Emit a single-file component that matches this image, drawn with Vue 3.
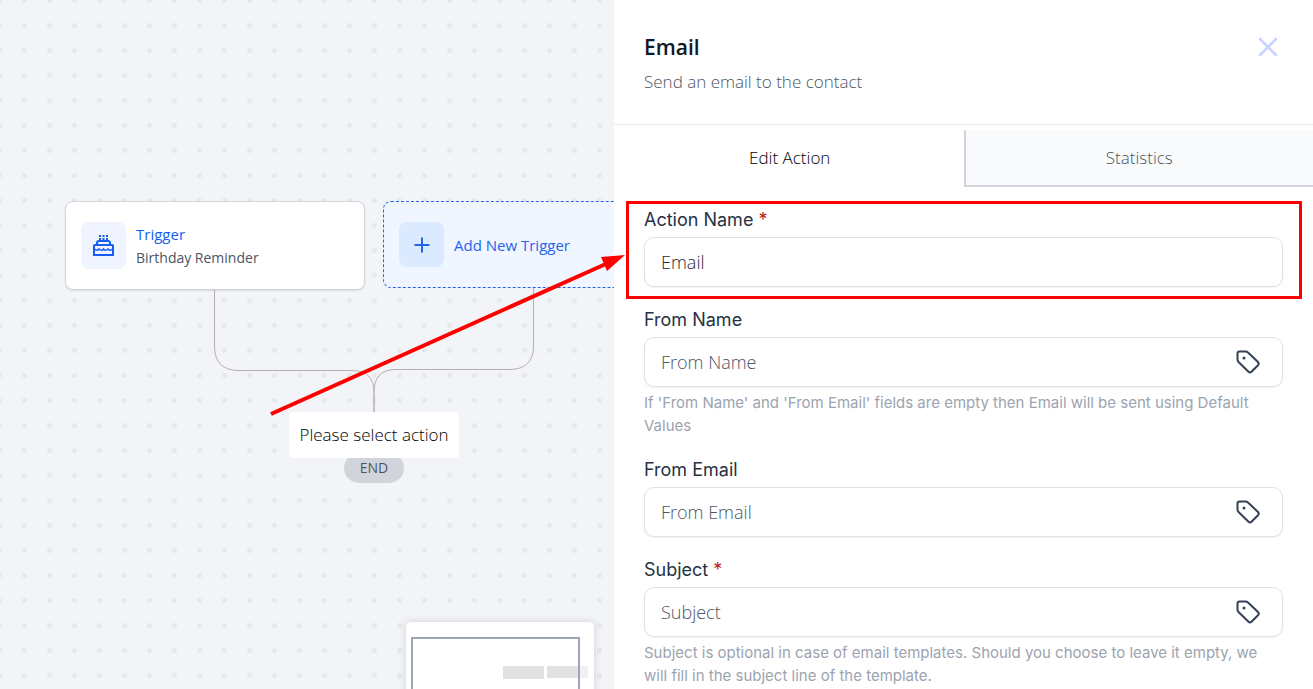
<script setup>
import { ref, reactive } from 'vue'

const activeTab = ref('edit')
const tabs = [
  { id: 'edit', label: 'Edit Action' },
  { id: 'stats', label: 'Statistics' },
]

const fields = reactive([
  { id: 'action-name', label: 'Action Name', required: true, value: 'Email', placeholder: 'Action Name', highlight: true },
  {
    id: 'from-name', label: 'From Name', value: '', placeholder: 'From Name', tag: true,
    help: "If 'From Name' and 'From Email' fields are empty then Email will be sent using Default Values",
  },
  { id: 'from-email', label: 'From Email', value: '', placeholder: 'From Email', tag: true },
  {
    id: 'subject', label: 'Subject', required: true, value: '', placeholder: 'Subject', tag: true,
    help: 'Subject is optional in case of email templates. Should you choose to leave it empty, we will fill in the subject line of the template.',
  },
])
</script>

<template>
  <main class="builder">
    <section class="canvas" aria-label="Workflow">
      <svg class="edges" aria-hidden="true">
        <path d="M214.500 290V346Q214.500 370.500 239 370.500H352Q374 370.500 374 392V412" />
        <path d="M533.500 288V346Q533.500 369.500 509 369.500H396Q374 369.500 374 392V412" />
      </svg>

      <div class="node trigger">
        <span class="node-icon">
          <svg width="21" height="21" viewBox="0 0 21 21" fill="none" stroke="currentColor" stroke-width="2">
            <path d="M1 20V11Q1 10 2 10H19Q20 10 20 11V20Z" />
            <path d="M4 10V8Q4 6 6 6H15Q17 6 17 8V10" />
            <path d="M1.500 14Q4 16.500 6 14Q8.500 16.500 10.500 14Q12.500 16.500 15 14Q17 16.500 19.500 14" stroke-width="1.600" />
            <path d="M7 3V6M10.500 3V6M14 3V6M7 0V2M10.500 0V2M14 0V2" />
          </svg>
        </span>
        <div class="node-text">
          <strong>Trigger</strong>
          <span>Birthday Reminder</span>
        </div>
      </div>

      <button class="node add-trigger" type="button">
        <span class="node-icon">
          <svg width="16" height="16" viewBox="0 0 16 16" fill="none" stroke="currentColor" stroke-width="2">
            <path d="M8 0.500V15.500M0.500 8H15.500" />
          </svg>
        </span>
        Add New Trigger
      </button>

      <div class="end">END</div>
      <div class="select-action">Please select action</div>

      <svg class="minimap" width="188" height="150" viewBox="0 0 188 150" aria-hidden="true">
        <rect x="97" y="44" width="41" height="13" fill="#e2e2e2" />
        <rect x="141" y="44" width="32" height="12" fill="#e2e2e2" />
        <rect x="173" y="44" width="9" height="12" fill="#f0f0f0" />
        <rect x="6" y="16" width="167" height="106" fill="none" stroke="#9aa5b8" stroke-width="2" />
      </svg>
    </section>

    <aside class="panel">
      <header class="panel-header">
        <div>
          <h1>Email</h1>
          <p>Send an email to the contact</p>
        </div>
        <button class="close" type="button" aria-label="Close">
          <svg width="20" height="20" viewBox="0 0 20 20" fill="none" stroke="currentColor" stroke-width="2.500" stroke-linecap="round">
            <path d="M2 2L18 18M18 2L2 18" />
          </svg>
        </button>
      </header>

      <nav class="tabs" role="tablist">
        <button
          v-for="tab in tabs"
          :key="tab.id"
          type="button"
          role="tab"
          :aria-selected="activeTab === tab.id"
          :class="['tab', { active: activeTab === tab.id }]"
          @click="activeTab = tab.id"
        >{{ tab.label }}</button>
      </nav>

      <form class="fields" @submit.prevent>
        <div v-for="field in fields" :key="field.id" :class="['field', { highlight: field.highlight }]">
          <label :for="field.id">{{ field.label }} <span v-if="field.required" class="required">*</span></label>
          <div class="control">
            <input :id="field.id" v-model="field.value" type="text" :placeholder="field.placeholder" />
            <button v-if="field.tag" type="button" class="tag" aria-label="Insert merge tag">
              <svg width="24" height="24" viewBox="0 0 24 24" fill="none" stroke="currentColor" stroke-width="2" stroke-linejoin="round">
                <path d="M3.500 1.500H9.500Q11 1.500 12 2.500L22 12Q23.500 13.600 22 15.200L15.500 21.700Q14 23 12.500 21.700L2.500 12Q1.500 11 1.500 9.500V3.500Q1.500 1.500 3.500 1.500Z" />
                <circle cx="8" cy="8" r="1.500" fill="currentColor" stroke="none" />
              </svg>
            </button>
          </div>
          <p v-if="field.help" class="help">{{ field.help }}</p>
        </div>
      </form>
    </aside>

    <svg class="pointer" aria-hidden="true">
      <path d="M271 414L608 263" stroke="#f00" stroke-width="4" />
      <path d="M625 255L601 257L607 271Z" fill="#f00" />
    </svg>
  </main>
</template>

<style>
body {
  margin: 0;
}
</style>

<style scoped>
.builder {
  position: relative;
  display: grid;
  grid-template-columns: minmax(0, 614fr) minmax(0, 699fr);
  height: 100vh;
  overflow: hidden;
  font-family: "Open Sans", "Noto Sans", sans-serif;
  font-size: 17px;
  font-weight: 300;
  background: #fff;
}

button {
  font: inherit;
  padding: 0;
  border: 0;
  background: none;
  cursor: pointer;
}

.canvas {
  position: relative;
  overflow: hidden;
  background-color: #f2f4f8;
  background-image: radial-gradient(circle, #e6e8e9 2px, transparent 3px);
  background-size: 25px 25px;
  background-position: 12px 13px;
}

.edges,
.pointer {
  position: absolute;
  top: 0;
  left: 0;
  width: 100%;
  height: 100%;
  pointer-events: none;
}

.edges path {
  fill: none;
  stroke: #b1b1b7;
  stroke-width: 1;
}

.node {
  position: absolute;
  box-sizing: border-box;
  display: flex;
  align-items: center;
  gap: 10px;
  width: 300px;
  padding: 0 15px;
  border-radius: 8px;
}

.trigger {
  top: 201px;
  left: 65px;
  height: 89px;
  border: 1px solid #d1d5db;
  background: #fff;
  box-shadow: 0 1px 2px rgba(0, 0, 0, 0.1);
}

.node-icon {
  display: flex;
  align-items: center;
  justify-content: center;
  width: 45px;
  height: 47px;
  border-radius: 8px;
  background: #eff4ff;
  color: #155eef;
}

.node-text {
  display: flex;
  flex-direction: column;
  font-size: 14px;
  font-weight: 400;
  line-height: 23px;
  color: #4b5563;
}

.node-text strong {
  font-size: 15px;
  font-weight: 400;
  color: #155eef;
}

.add-trigger {
  top: 201px;
  left: 383px;
  height: 87px;
  border: 1px dashed #2563eb;
  background: #eff6ff;
  color: #2563eb;
  font-size: 15px;
  font-weight: 400;
}

.add-trigger .node-icon {
  height: 45px;
  background: #dbeafe;
  color: #2563eb;
}

.end {
  position: absolute;
  top: 453px;
  left: 344px;
  width: 60px;
  height: 30px;
  border-radius: 15px;
  background: #d1d5db;
  color: #4b5563;
  font-size: 14px;
  font-weight: 400;
  line-height: 30px;
  text-align: center;
}

.select-action {
  position: absolute;
  top: 412px;
  left: 289px;
  width: 170px;
  border-radius: 4px;
  background: #fff;
  color: #000;
  line-height: 46px;
  text-align: center;
}

.minimap {
  position: absolute;
  right: 20px;
  bottom: -83px;
  border-radius: 5px;
  background: #fff;
  box-shadow: 0 0 8px rgba(0, 0, 0, 0.15);
}

.panel-header {
  display: flex;
  align-items: flex-start;
  justify-content: space-between;
  padding: 32px 35px 28px 30px;
  border-bottom: 1px solid #e5e7eb;
}

.panel-header h1 {
  margin: 0;
  font-size: 21px;
  font-weight: 600;
  line-height: 30px;
  color: #111827;
}

.panel-header p {
  margin: 6px 0 0;
  line-height: 28px;
  color: #4b5563;
}

.close {
  display: flex;
  margin-top: 5px;
  color: #c7d2fe;
}

.tabs {
  display: flex;
  margin: 5px 0 21px;
}

.tab {
  flex: 1;
  box-sizing: border-box;
  height: 57px;
  border-bottom: 2px solid #d1d5db;
  border-left: 2px solid #d1d5db;
  background: #f9fafb;
  color: #4b5563;
}

.tab.active {
  border-color: transparent;
  background: #fff;
  color: #000;
}

.fields {
  display: flex;
  flex-direction: column;
  gap: 21px;
  padding: 0 30px;
  font-family: Inter, sans-serif;
  font-weight: 400;
}

.field {
  position: relative;
}

.highlight::after {
  content: "";
  position: absolute;
  inset: -7px -19px -12px -18px;
  border: 3px solid #f00;
  pointer-events: none;
}

label {
  display: block;
  margin-bottom: 5px;
  font-size: 18px;
  line-height: 24px;
  color: #263244;
}

.required {
  color: #b91c1c;
}

.control {
  display: flex;
  align-items: center;
  box-sizing: border-box;
  height: 50px;
  padding: 0 22px 0 16px;
  border: 1px solid #dfe1e7;
  border-radius: 10px;
  background: #fff;
  box-shadow: 0 1px 2px rgba(16, 24, 40, 0.06);
}

input {
  flex: 1;
  min-width: 0;
  padding: 0;
  border: 0;
  outline: 0;
  background: none;
  font: 300 18px "Open Sans", "Noto Sans", sans-serif;
  color: #1f2937;
}

input::placeholder {
  color: #4b5563;
  opacity: 1;
}

.tag {
  display: flex;
  color: #344054;
}

.help {
  margin: 4px 0 0;
  font-size: 15px;
  line-height: 23px;
  color: #9ca3af;
}
</style>
